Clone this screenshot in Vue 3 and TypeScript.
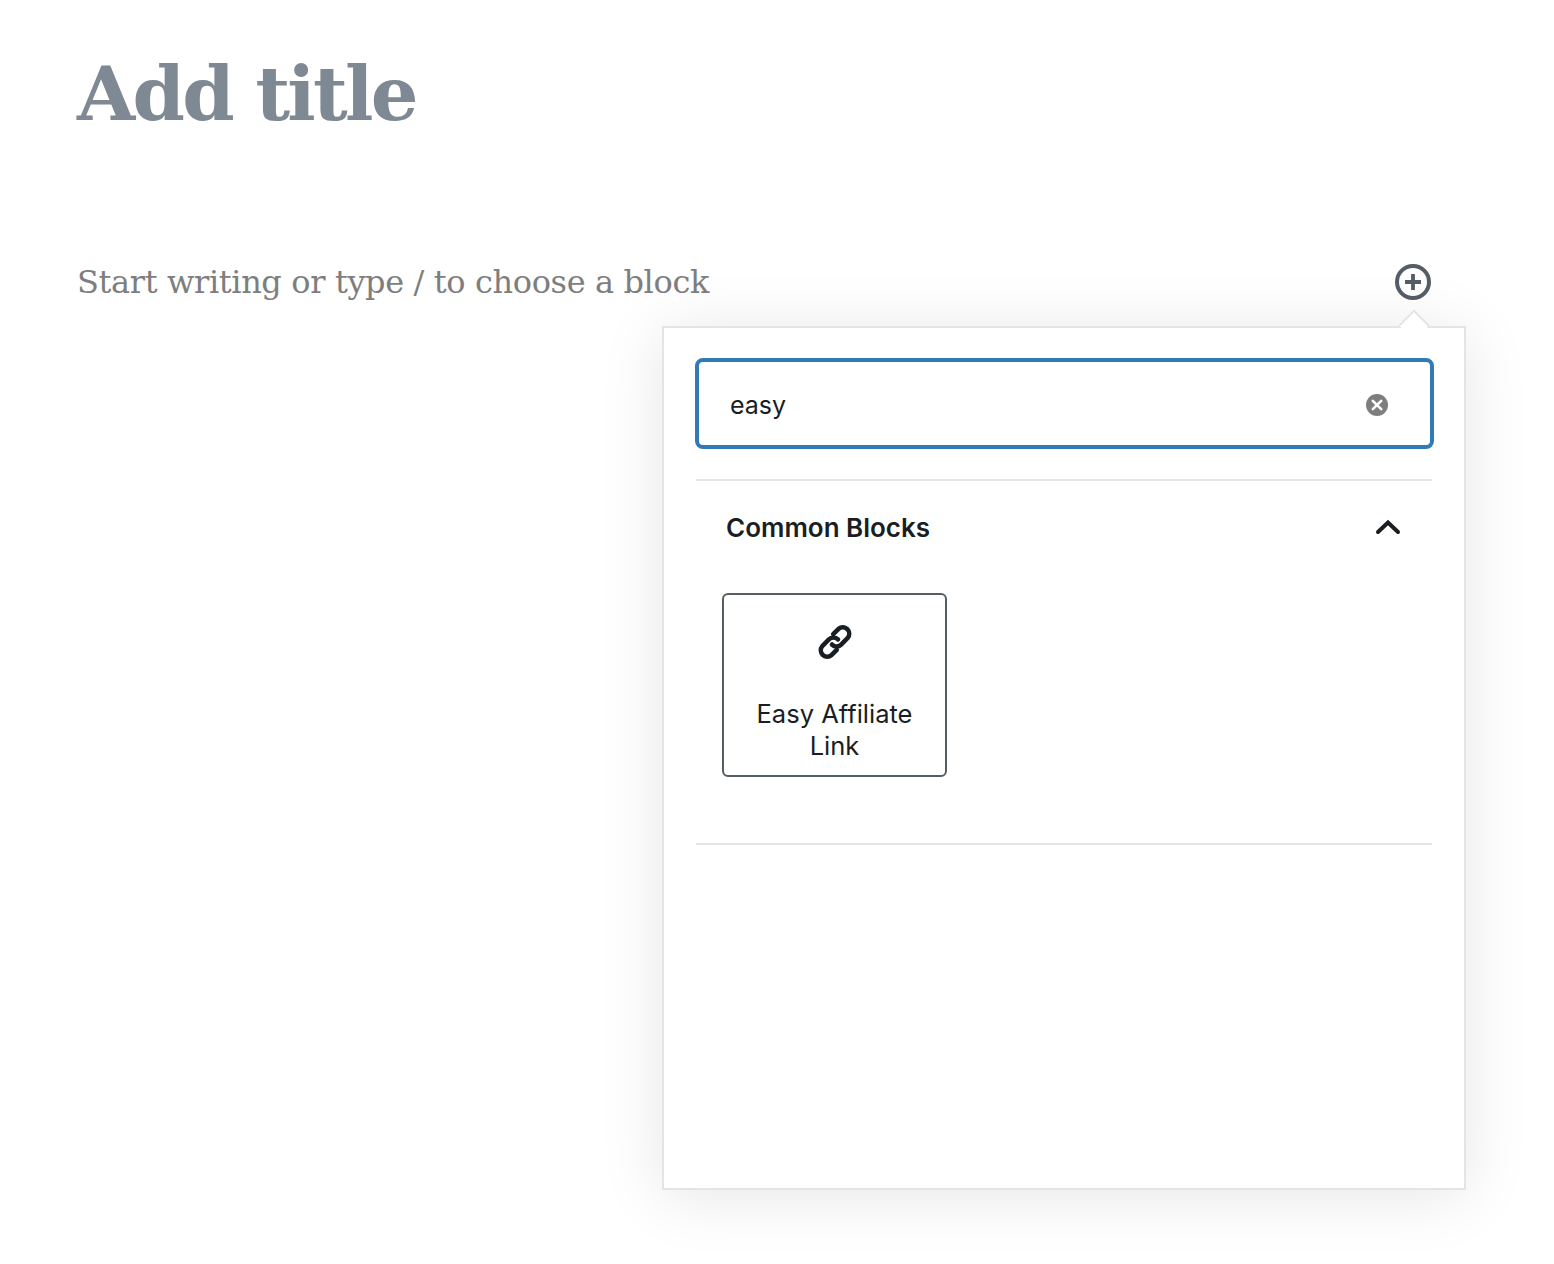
<template>
  <div class="editor">
    <h1 class="post-title">Add title</h1>
    <div class="block-row">
      <p class="placeholder">Start writing or type / to choose a block</p>
      <button class="inserter-toggle" aria-label="Add block">
        <svg width="38" height="38" viewBox="0 0 38 38">
          <circle cx="19" cy="19" r="16" fill="#fff" stroke="#555d66" stroke-width="4" />
          <path d="M19 11v16M11 19h16" stroke="#555d66" stroke-width="3.800" fill="none" />
        </svg>
      </button>
    </div>

    <div class="popover">
      <span class="arrow"></span>
      <div class="search-wrap">
        <div class="search">
          <input v-model="query" class="search-input" type="text" />
          <svg class="clear" width="24" height="24" viewBox="0 0 24 24">
            <circle cx="12" cy="12" r="11" fill="#7e7e7e" />
            <path d="M7.8 7.8l8.4 8.4M16.2 7.8l-8.4 8.4" stroke="#fff" stroke-width="2.6" stroke-linecap="round" />
          </svg>
        </div>
      </div>
      <div class="panel">
        <div class="panel-head">
          <h2 class="panel-title">Common Blocks</h2>
          <svg width="28" height="28" viewBox="0 0 28 28">
            <path d="M4 19L14 9.500 24 19" stroke="#191e23" stroke-width="4" fill="none" stroke-linecap="round" stroke-linejoin="miter" />
          </svg>
        </div>
        <div class="block-list">
          <button v-for="item in blocks" :key="item" class="block-item">
            <svg width="48" height="48" viewBox="0 0 40 40">
              <g fill="none" stroke="#191e23" stroke-width="3.800" stroke-linecap="round" stroke-linejoin="round">
                <path d="M18.500 13.500l4.500-4.500a5.400 5.400 0 0 1 7.600 7.600l-5.500 5.500a5.400 5.400 0 0 1-7.600 0" />
                <path d="M21.500 26.500l-4.500 4.500a5.400 5.400 0 0 1-7.600-7.600l5.500-5.500a5.400 5.400 0 0 1 7.600 0" />
              </g>
            </svg>
            <span class="block-label">{{ item }}</span>
          </button>
        </div>
      </div>
    </div>
  </div>
</template>

<script setup lang="ts">
import { ref } from "vue";

const query = ref<string>("easy");
const blocks: string[] = ["Easy Affiliate Link"];
</script>

<style scoped>
.editor {
  position: relative;
  height: 1264px;
  padding: 49px 0 0 77px;
  box-sizing: border-box;
  background: #fff;
  overflow: hidden;
}

.post-title {
  margin: 0;
  height: 90px;
  font-family: "DejaVu Serif", "Liberation Serif", serif;
  font-size: 75px;
  line-height: 90px;
  font-weight: 700;
  letter-spacing: -2.700px;
  color: #7e8993;
}

.block-row {
  display: flex;
  align-items: center;
  justify-content: space-between;
  width: 1355px;
  margin-top: 124px;
  height: 38px;
}

.placeholder {
  margin: 0;
  font-family: "DejaVu Serif", "Liberation Serif", serif;
  font-size: 32px;
  line-height: 38px;
  letter-spacing: -0.370px;
  color: #7e7e7e;
  white-space: nowrap;
}

.inserter-toggle {
  width: 38px;
  height: 38px;
  padding: 0;
  border: 0;
  background: none;
  display: block;
}

.popover {
  position: absolute;
  left: 662px;
  top: 326px;
  width: 804px;
  height: 864px;
  box-sizing: border-box;
  border: 2px solid #e2e4e7;
  background: #fff;
  box-shadow: 0 6px 60px rgba(0, 0, 0, 0.1);
  font-family: Inter, "Noto Sans", sans-serif;
}

.arrow {
  position: absolute;
  top: -14px;
  left: 739px;
  width: 22px;
  height: 22px;
  box-sizing: border-box;
  transform: rotate(45deg);
  background: #fff;
  border-top: 2px solid #e2e4e7;
  border-left: 2px solid #e2e4e7;
}

.search-wrap {
  padding: 30px 30px 30px 31px;
  position: relative;
}

.search {
  display: flex;
  align-items: center;
  height: 91px;
  box-sizing: border-box;
  border: 4px solid #317ab7;
  border-radius: 8px;
  padding: 0 41px 0 31px;
}

.search-input {
  flex: 1;
  min-width: 0;
  border: 0;
  outline: 0;
  padding: 2px 0 0;
  font-family: Inter, "Noto Sans", sans-serif;
  font-size: 25px;
  color: #191e23;
  background: transparent;
}

.clear {
  margin-top: 2px;
}

.panel {
  margin: 0 32px;
  height: 366px;
  box-sizing: border-box;
  border-top: 2px solid #e2e4e7;
  border-bottom: 2px solid #e2e4e7;
}

.panel-head {
  display: flex;
  align-items: center;
  justify-content: space-between;
  height: 92px;
  padding: 0 30px;
}

.panel-title {
  margin: 0;
  font-size: 26px;
  font-weight: 600;
  color: #191e23;
}

.block-list {
  display: flex;
  padding: 20px 26px 0;
}

.block-item {
  width: 225px;
  height: 184px;
  box-sizing: border-box;
  display: flex;
  flex-direction: column;
  align-items: center;
  padding: 23px 10px 0;
  background: #fff;
  border: 2px solid #555d66;
  border-radius: 6px;
  font-family: Inter, "Noto Sans", sans-serif;
}

.block-label {
  margin-top: 32px;
  font-size: 25.500px;
  line-height: 32px;
  color: #191e23;
  text-align: center;
}
</style>
